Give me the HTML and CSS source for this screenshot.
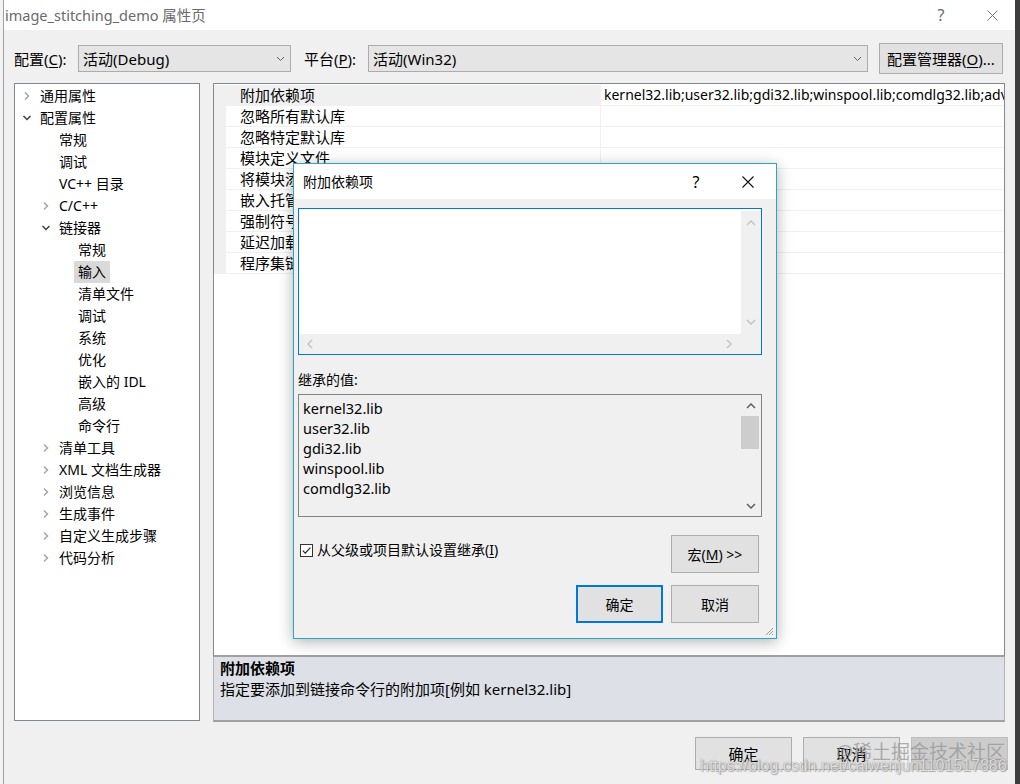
FILE: index.html
```html
<!DOCTYPE html>
<html>
<head>
<meta charset="utf-8">
<title>image_stitching_demo 属性页</title>
<link rel="stylesheet" href="styles.css">
</head>
<body>
<div class="desktop">
  <div class="bgstrip"></div>
  <div class="window">
    <div class="titlebar">
      <span class="title">image_stitching_demo 属性页</span>
      <span class="tb-help">?</span>
      <span class="tb-close"><svg width="11" height="11" viewBox="0 0 11 11"><path d="M0.5 0.5 L10.5 10.5 M10.5 0.5 L0.5 10.5" stroke="#777" stroke-width="1" fill="none"/></svg></span>
    </div>

    <div class="toolbar">
      <span class="tlabel">配置(<u>C</u>):</span>
      <div class="combo combo-config"><span class="combo-text">活动(Debug)</span><svg class="combo-chev" width="9" height="6" viewBox="0 0 9 6"><path d="M1 1 L4.5 4.5 L8 1" stroke="#606060" stroke-width="1" fill="none"/></svg></div>
      <span class="tlabel tlabel-2">平台(<u>P</u>):</span>
      <div class="combo combo-platform"><span class="combo-text">活动(Win32)</span><svg class="combo-chev" width="9" height="6" viewBox="0 0 9 6"><path d="M1 1 L4.5 4.5 L8 1" stroke="#606060" stroke-width="1" fill="none"/></svg></div>
      <button class="btn btn-mgr">配置管理器(<u>O</u>)...</button>
    </div>

    <div class="main">
      <div class="tree">
        <div class="node l0"><span class="arw"><svg width="8" height="10" viewBox="0 0 8 10"><path d="M2 1.5 L5.5 5 L2 8.5" stroke="#a6a6a6" stroke-width="1.5" fill="none"/></svg></span><span class="lbl">通用属性</span></div>
        <div class="node l0"><span class="arw"><svg width="10" height="8" viewBox="0 0 10 8"><path d="M1.5 2 L5 5.5 L8.5 2" stroke="#404040" stroke-width="1.5" fill="none"/></svg></span><span class="lbl">配置属性</span></div>
        <div class="node l1"><span class="arw"></span><span class="lbl">常规</span></div>
        <div class="node l1"><span class="arw"></span><span class="lbl">调试</span></div>
        <div class="node l1"><span class="arw"></span><span class="lbl">VC++ 目录</span></div>
        <div class="node l1"><span class="arw"><svg width="8" height="10" viewBox="0 0 8 10"><path d="M2 1.5 L5.5 5 L2 8.5" stroke="#a6a6a6" stroke-width="1.5" fill="none"/></svg></span><span class="lbl">C/C++</span></div>
        <div class="node l1"><span class="arw"><svg width="10" height="8" viewBox="0 0 10 8"><path d="M1.5 2 L5 5.5 L8.5 2" stroke="#404040" stroke-width="1.5" fill="none"/></svg></span><span class="lbl">链接器</span></div>
        <div class="node l2"><span class="arw"></span><span class="lbl">常规</span></div>
        <div class="node l2"><span class="arw"></span><span class="lbl sel">输入</span></div>
        <div class="node l2"><span class="arw"></span><span class="lbl">清单文件</span></div>
        <div class="node l2"><span class="arw"></span><span class="lbl">调试</span></div>
        <div class="node l2"><span class="arw"></span><span class="lbl">系统</span></div>
        <div class="node l2"><span class="arw"></span><span class="lbl">优化</span></div>
        <div class="node l2"><span class="arw"></span><span class="lbl">嵌入的 IDL</span></div>
        <div class="node l2"><span class="arw"></span><span class="lbl">高级</span></div>
        <div class="node l2"><span class="arw"></span><span class="lbl">命令行</span></div>
        <div class="node l1"><span class="arw"><svg width="8" height="10" viewBox="0 0 8 10"><path d="M2 1.5 L5.5 5 L2 8.5" stroke="#a6a6a6" stroke-width="1.5" fill="none"/></svg></span><span class="lbl">清单工具</span></div>
        <div class="node l1"><span class="arw"><svg width="8" height="10" viewBox="0 0 8 10"><path d="M2 1.5 L5.5 5 L2 8.5" stroke="#a6a6a6" stroke-width="1.5" fill="none"/></svg></span><span class="lbl">XML 文档生成器</span></div>
        <div class="node l1"><span class="arw"><svg width="8" height="10" viewBox="0 0 8 10"><path d="M2 1.5 L5.5 5 L2 8.5" stroke="#a6a6a6" stroke-width="1.5" fill="none"/></svg></span><span class="lbl">浏览信息</span></div>
        <div class="node l1"><span class="arw"><svg width="8" height="10" viewBox="0 0 8 10"><path d="M2 1.5 L5.5 5 L2 8.5" stroke="#a6a6a6" stroke-width="1.5" fill="none"/></svg></span><span class="lbl">生成事件</span></div>
        <div class="node l1"><span class="arw"><svg width="8" height="10" viewBox="0 0 8 10"><path d="M2 1.5 L5.5 5 L2 8.5" stroke="#a6a6a6" stroke-width="1.5" fill="none"/></svg></span><span class="lbl">自定义生成步骤</span></div>
        <div class="node l1"><span class="arw"><svg width="8" height="10" viewBox="0 0 8 10"><path d="M2 1.5 L5.5 5 L2 8.5" stroke="#a6a6a6" stroke-width="1.5" fill="none"/></svg></span><span class="lbl">代码分析</span></div>
      </div>

      <div class="right">
        <div class="grid">
          <div class="rows">
            <div class="row first"><span class="gut"></span><span class="name">附加依赖项</span><span class="val">kernel32.lib;user32.lib;gdi32.lib;winspool.lib;comdlg32.lib;advapi32.lib;shell32.lib;ole32.lib</span></div>
            <div class="row"><span class="gut"></span><span class="name">忽略所有默认库</span><span class="val"></span></div>
            <div class="row"><span class="gut"></span><span class="name">忽略特定默认库</span><span class="val"></span></div>
            <div class="row"><span class="gut"></span><span class="name">模块定义文件</span><span class="val"></span></div>
            <div class="row"><span class="gut"></span><span class="name">将模块添加到程序集</span><span class="val"></span></div>
            <div class="row"><span class="gut"></span><span class="name">嵌入托管资源文件</span><span class="val"></span></div>
            <div class="row"><span class="gut"></span><span class="name">强制符号引用</span><span class="val"></span></div>
            <div class="row"><span class="gut"></span><span class="name">延迟加载的 DLL</span><span class="val"></span></div>
            <div class="row"><span class="gut"></span><span class="name">程序集链接资源</span><span class="val"></span></div>
          </div>
        </div>
        <div class="desc">
          <div class="desc-title">附加依赖项</div>
          <div class="desc-text">指定要添加到链接命令行的附加项[例如 kernel32.lib]</div>
        </div>
      </div>
    </div>

    <div class="footer">
      <button class="btn fbtn">确定</button>
      <button class="btn fbtn">取消</button>
      <button class="btn fbtn disabled"></button>
    </div>
  </div>

  <div class="dialog">
    <div class="dlg-title">
      <span class="dlg-name">附加依赖项</span>
      <span class="dlg-help">?</span>
      <span class="dlg-close"><svg width="12" height="12" viewBox="0 0 12 12"><path d="M0.5 0.5 L11.5 11.5 M11.5 0.5 L0.5 11.5" stroke="#111" stroke-width="1.1" fill="none"/></svg></span>
    </div>
    <div class="dlg-body">
      <div class="edit">
        <div class="edit-area"></div>
        <div class="vsb">
          <svg width="10" height="6" viewBox="0 0 10 6"><path d="M1 5 L5 1 L9 5" stroke="#c4c4c4" stroke-width="1.5" fill="none"/></svg>
          <svg width="10" height="6" viewBox="0 0 10 6"><path d="M1 1 L5 5 L9 1" stroke="#c4c4c4" stroke-width="1.5" fill="none"/></svg>
        </div>
        <div class="hsb">
          <svg width="6" height="10" viewBox="0 0 6 10"><path d="M5 1 L1 5 L5 9" stroke="#c4c4c4" stroke-width="1.5" fill="none"/></svg>
          <svg width="6" height="10" viewBox="0 0 6 10"><path d="M1 1 L5 5 L1 9" stroke="#c4c4c4" stroke-width="1.5" fill="none"/></svg>
        </div>
        <div class="corner"></div>
      </div>
      <div class="inh-label">继承的值:</div>
      <div class="list">
        <div class="list-items">
          <div class="li">kernel32.lib</div>
          <div class="li">user32.lib</div>
          <div class="li">gdi32.lib</div>
          <div class="li">winspool.lib</div>
          <div class="li">comdlg32.lib</div>
        </div>
        <div class="lsb">
          <span class="lsb-btn"><svg width="10" height="6" viewBox="0 0 10 6"><path d="M1 5 L5 1 L9 5" stroke="#606060" stroke-width="1.5" fill="none"/></svg></span>
          <span class="thumb"></span>
          <span class="lsb-fill"></span>
          <span class="lsb-btn"><svg width="10" height="6" viewBox="0 0 10 6"><path d="M1 1 L5 5 L9 1" stroke="#606060" stroke-width="1.5" fill="none"/></svg></span>
        </div>
      </div>
      <div class="opt-row">
        <label class="chk"><span class="box"><svg width="11" height="11" viewBox="0 0 11 11"><path d="M1.8 5.6 L4.3 8.2 L9.4 2.6" stroke="#222" stroke-width="1.2" fill="none"/></svg></span>从父级或项目默认设置继承(<u>I</u>)</label>
        <button class="btn dbtn">宏(<u>M</u>) &gt;&gt;</button>
      </div>
      <div class="btn-row">
        <button class="btn dbtn primary">确定</button>
        <button class="btn dbtn">取消</button>
      </div>
    </div>
    <svg class="grip" width="10" height="10" viewBox="0 0 10 10"><path d="M9 2 L2 9 M9 5 L5 9 M9 8 L8 9" stroke="#9a9a9a" stroke-width="1" fill="none"/></svg>
  </div>

  <div class="wm-logo">@稀土掘金技术社区</div>
  <div class="wm-url">https://blog.csdn.net/caiwenjun1101517886</div>
</div>
</body>
</html>
```

FILE: styles.css
```css
* { box-sizing: border-box; }
html, body { margin: 0; padding: 0; }
body {
  width: 1020px;
  height: 784px;
  overflow: hidden;
  background: #3d3d3d;
  font-family: "Noto Sans", "Noto Sans CJK SC", sans-serif;
  font-size: 14px;
  color: #000;
}
u { text-decoration: underline; text-underline-offset: 2px; }

.desktop { display: flex; height: 784px; position: relative; }
.bgstrip { width: 3px; background: #f3f3f3; }

.window {
  width: 1012px;
  height: 784px;
  background: #f0f0f0;
  border-left: 1px solid #a0a0a0;
  display: flex;
  flex-direction: column;
}

.titlebar {
  height: 30px;
  background: #fff;
  display: flex;
  align-items: center;
  padding-left: 1px;
  color: #6a6a6a;
  font-size: 14.5px;
  line-height: 20px;
}
.title { flex: 1; }
.tb-help { width: 46px; text-align: center; margin-right: 5px; font-size: 16px; }
.tb-close { width: 46px; display: flex; justify-content: center; }

.toolbar {
  display: flex;
  align-items: center;
  height: 31px;
  margin-top: 13px;
  padding-left: 10px;
  font-size: 15px;
}
.tlabel { width: 64px; line-height: 20px; }
.tlabel-2 { margin-left: 13px; }
.combo {
  height: 27px;
  background: #e5e5e5;
  border: 1px solid #acacac;
  display: flex;
  align-items: center;
  padding-left: 4px;
  padding-right: 5px;
}
.combo-config { width: 213px; }
.combo-platform { width: 500px; }
.combo-text { flex: 1; line-height: 20px; }
.combo-chev { display: block; }

.btn {
  font-family: "Noto Sans", "Noto Sans CJK SC", sans-serif;
  background: #e1e1e1;
  border: 1px solid #adadad;
  color: #000;
  padding: 0;
  margin: 0;
  display: flex;
  align-items: center;
  justify-content: center;
}
.btn-mgr { width: 124px; height: 31px; margin-left: 11px; font-size: 15px; }

.main {
  display: flex;
  margin-top: 9px;
  padding-left: 10px;
  height: 639px;
}
.tree {
  width: 186px;
  height: 638px;
  background: #fff;
  border: 1px solid #828790;
  padding-top: 1px;
  font-size: 14px;
}
.node { display: flex; align-items: center; height: 22px; }
.node.l1 { padding-left: 19px; }
.node.l2 { padding-left: 38px; }
.arw {
  width: 21px;
  height: 22px;
  padding-left: 3px;
  display: flex;
  align-items: center;
  justify-content: center;
}
.arw svg { display: block; }
.lbl { padding: 0 4px; height: 22px; line-height: 22px; white-space: nowrap; }
.lbl.sel { background: #d9d9d9; }

.right {
  width: 792px;
  margin-left: 13px;
  display: flex;
  flex-direction: column;
}
.grid {
  height: 574px;
  background: #fff;
  border: 1px solid #828790;
  border-bottom: 2px solid #a0a0a0;
}
.rows { padding-top: 1px; font-size: 15px; }
.row { display: flex; height: 21px; }
.gut { width: 12px; background: #f0f0f0; }
.name {
  width: 374px;
  padding-left: 14px;
  line-height: 20px;
  border-bottom: 1px solid #f0f0f0;
  white-space: nowrap;
}
.row.first .name { background: #f0f0f0; }
.val {
  flex: 1;
  min-width: 0;
  padding-left: 3px;
  font-size: 14px;
  line-height: 20px;
  border-left: 1px solid #f0f0f0;
  border-bottom: 1px solid #f0f0f0;
  white-space: nowrap;
  overflow: hidden;
}
.desc {
  height: 65px;
  background: #dde0e7;
  border: 1px solid #b4b4b4;
  border-top: none;
  border-bottom: 2px solid #a0a0a0;
  padding: 1px 0 0 6px;
  font-size: 15px;
  line-height: 21px;
}
.desc-title { font-weight: bold; }

.footer {
  display: flex;
  justify-content: flex-end;
  gap: 11px;
  margin-top: 15px;
  padding-right: 7px;
}
.fbtn { width: 97px; height: 33px; font-size: 15px; }
.fbtn.disabled { background: #cccccc; border-color: #bfbfbf; }

/* dialog overlay */
.dialog {
  position: absolute;
  left: 293px;
  top: 163px;
  width: 484px;
  height: 476px;
  background: #f0f0f0;
  border: 1px solid #2ca6bf;
  box-shadow: 0 3px 14px rgba(0, 0, 0, 0.3);
  display: flex;
  flex-direction: column;
}
.dlg-title {
  height: 35px;
  background: #fff;
  display: flex;
  align-items: center;
  padding-left: 9px;
  font-size: 14px;
}
.dlg-name { flex: 1; line-height: 20px; }
.dlg-help { width: 24px; text-align: center; margin-right: 28px; font-size: 16px; }
.dlg-close { width: 24px; display: flex; justify-content: center; margin-right: 16px; }

.dlg-body {
  padding: 9px 14px 15px 4px;
  display: flex;
  flex-direction: column;
}
.edit {
  height: 147px;
  border: 1px solid #0078d7;
  display: grid;
  grid-template-columns: 1fr 20px;
  grid-template-rows: 1fr 20px;
  background: #fff;
}
.edit-area { background: #fff; }
.vsb {
  background: #f0f0f0;
  display: flex;
  flex-direction: column;
  align-items: center;
  justify-content: space-between;
  padding: 9px 0 9px;
  margin-top: 2px;
}
.hsb {
  background: #f0f0f0;
  display: flex;
  align-items: center;
  justify-content: space-between;
  padding: 0 9px 0 8px;
}
.corner { background: #f0f0f0; }
.vsb svg, .hsb svg { display: block; }

.inh-label { margin-top: 15px; height: 20px; line-height: 20px; font-size: 14px; }

.list {
  margin-top: 4px;
  height: 123px;
  border: 1px solid #828282;
  background: #f0f0f0;
  display: flex;
}
.list-items { flex: 1; padding: 3px 0 0 4px; font-size: 14.5px; }
.li { height: 20px; line-height: 20px; }
.lsb { width: 20px; display: flex; flex-direction: column; }
.lsb-btn { height: 21px; display: flex; align-items: center; justify-content: center; }
.lsb-btn svg { display: block; }
.thumb { height: 33px; width: 18px; background: #cdcdcd; }
.lsb-fill { flex: 1; }

.opt-row {
  margin-top: 18px;
  display: flex;
  justify-content: space-between;
  align-items: flex-start;
}
.chk {
  display: flex;
  align-items: center;
  margin-left: 2px;
  margin-top: 6px;
  line-height: 18px;
  font-size: 14px;
}
.box {
  width: 13px;
  height: 13px;
  border: 1px solid #333;
  background: #fff;
  margin-right: 4px;
  display: flex;
  align-items: center;
  justify-content: center;
}
.box svg { display: block; }
.dbtn { width: 88px; height: 38px; font-size: 14px; margin-right: 3px; }
.btn-row {
  margin-top: 12px;
  display: flex;
  justify-content: flex-end;
  gap: 8px;
}
.dbtn.primary { width: 87px; border: 2px solid #0078d7; margin-right: 0; }
.grip { position: absolute; right: 2px; bottom: 2px; display: block; }

/* watermark overlay */
.wm-logo {
  position: absolute;
  left: 836px;
  top: 739px;
  font-size: 19px;
  line-height: 26px;
  color: rgba(150, 150, 150, 0.75);
  white-space: nowrap;
}
.wm-url {
  position: absolute;
  left: 700px;
  top: 756px;
  font-family: "Liberation Sans", sans-serif;
  font-size: 16px;
  line-height: 20px;
  color: rgba(255, 255, 255, 0.75);
  text-shadow: 0 0 1px rgba(90, 90, 90, 0.8), 1px 1px 1px rgba(120, 120, 120, 0.5);
  white-space: nowrap;
}
```
